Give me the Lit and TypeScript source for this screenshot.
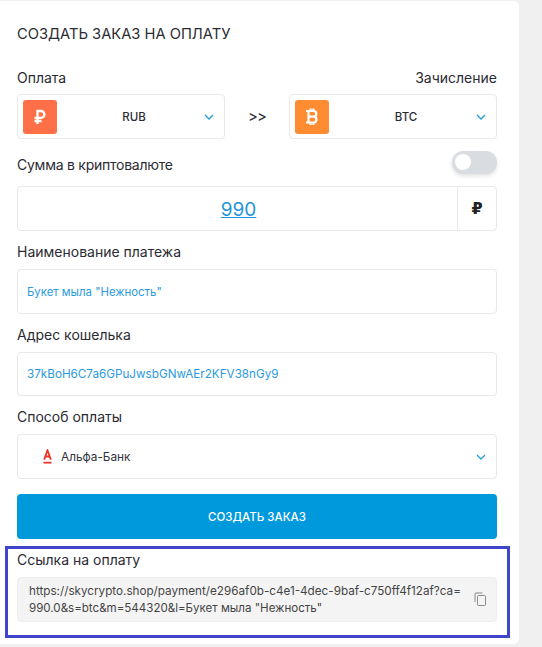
import { LitElement, html, css } from "lit";
import { customElement } from "lit/decorators.js";

const chevron = html`<svg class="chev" viewBox="0 0 10 6" width="10" height="6"><path d="M1 1l4 4 4-4" fill="none" stroke="#1f9fdc" stroke-width="1.3"/></svg>`;

@customElement("app-root")
export class AppRoot extends LitElement {
  static styles = css`
    :host { display: block; background: #f0f0f0; height: 647px; overflow: hidden; font-family: "Inter", "Noto Sans", sans-serif; color: #2b2b33; padding-top: 1px; box-sizing: border-box; }
    .card { width: 519px; height: 643px; box-sizing: border-box; background: #fff; border-radius: 0 5px 5px 0; padding: 0 22px 0 17px; display: flex; flex-direction: column; }
    .title { font-size: 14.7px; line-height: 20px; margin-top: 23px; letter-spacing: 0; }
    .label { font-size: 14px; line-height: 18px; }
    .between { display: flex; justify-content: space-between; align-items: center; }
    .row1 { margin-top: 25px; height: 18px; }
    .selects { display: flex; justify-content: space-between; align-items: center; margin-top: 7px; }
    .select { height: 45px; box-sizing: border-box; border: 1px solid #e9e9ec; border-radius: 4px; display: flex; align-items: center; padding: 0 10px 0 5px; background: #fff; }
    .half { width: 208px; }
    .coin { width: 34px; height: 34px; border-radius: 3px; display: flex; align-items: center; justify-content: center; flex: none; }
    .rub { background: #ff7048; }
    .btc { background: #ff8c33; }
    .code { flex: 1; text-align: center; font-size: 11.5px; font-weight: 500; padding-left: 7px; }
    .chev { flex: none; }
    .arrows { width: 64px; text-align: center; font-size: 15px; letter-spacing: -1px; }
    .amount-label { margin-top: 11px; height: 24px; }
    .amount-label span { padding-top: 6px; letter-spacing: -0.25px; }
    .toggle { width: 45px; height: 23px; border-radius: 12px; background: #d9dce0; box-shadow: 0 2px 4px rgba(0,0,0,.12); position: relative; }
    .knob { position: absolute; left: 3px; top: 3px; width: 16px; height: 16px; border-radius: 50%; background: #fff; }
    .amount { margin-top: 12px; height: 45px; box-sizing: border-box; border: 1px solid #e9e9ec; border-radius: 4px; display: flex; }
    .amount-value { flex: 1; display: flex; align-items: center; justify-content: center; font-size: 19px; color: #1f95d8; text-decoration: underline; padding: 2px 0 0 2px; }
    .amount-unit { width: 38px; border-left: 1px solid #e9e9ec; display: flex; align-items: center; justify-content: center; font-size: 16px; font-weight: 700; color: #222; font-family: "DejaVu Sans", sans-serif; }
    .flabel { margin-top: 12px; margin-bottom: 8px; height: 18px; }
    .field { height: 44.5px; box-sizing: border-box; border: 1px solid #e9e9ec; border-radius: 4px; display: flex; align-items: center; padding: 1px 9px 0; font-size: 11.4px; color: #2b9ae0; flex: none; }
    .addr { font-size: 11.7px; }
    .bank { padding-left: 25px; padding-right: 10px; color: #33333a; font-size: 11.8px; }
    .bank-name { flex: 1; margin-left: 9px; }
    .btn { margin-top: 15.5px; height: 45px; border-radius: 4px; background: #0099dc; color: #fff; display: flex; align-items: center; justify-content: center; font-size: 11.5px; font-weight: 500; flex: none; }
    .link-box { margin: 7px -13px 0 -12px; height: 92px; box-sizing: border-box; border: 3px solid #3e45c9; padding: 2px 10px 0 9px; flex: none; }
    .link-label { height: 20px; line-height: 18px; }
    .link { margin-top: 6px; height: 45px; box-sizing: border-box; background: #f4f4f5; border: 1px solid #eeeeef; border-radius: 4px; display: flex; align-items: center; padding: 0 10px 0 11px; font-size: 11.7px; line-height: 17px; color: #444; }
    .link-text { flex: 1; white-space: nowrap; overflow: hidden; }
    .line2 { font-size: 11.55px; }
    .copy { flex: none; margin-top: -2px; }
  `;

  render() {
    return html`<div class="card">
      <div class="title">СОЗДАТЬ ЗАКАЗ НА ОПЛАТУ</div>
      <div class="between row1 label"><span>Оплата</span><span>Зачисление</span></div>
      <div class="selects">
        <div class="select half">
          <div class="coin rub"><svg width="14" height="16" viewBox="0 0 14 16"><path d="M4.500 15V2h3.500a3.300 3.300 0 0 1 0 6.800H1.500M1.500 12H8.500" fill="none" stroke="#fff" stroke-width="2.300"/></svg></div>
          <span class="code">RUB</span>${chevron}
        </div>
        <div class="arrows">&gt;&gt;</div>
        <div class="select half">
          <div class="coin btc"><svg width="14" height="20" viewBox="0 0 14 20"><path d="M3 4h5.500a2.700 2.700 0 0 1 0 5.600H3M8.500 9.600a2.900 2.900 0 0 1 0 5.900H3M3.500 3v13.500M1 4h2M1 15.500h2M5.500 1.500V4M8.500 1.500V4M5.500 15.500V18M8.500 15.500V18" fill="none" stroke="#fff" stroke-width="2.200"/></svg></div>
          <span class="code">BTC</span>${chevron}
        </div>
      </div>
      <div class="between amount-label label"><span>Сумма в криптовалюте</span><div class="toggle"><div class="knob"></div></div></div>
      <div class="amount"><div class="amount-value">990</div><div class="amount-unit">₽</div></div>
      <div class="flabel label">Наименование платежа</div>
      <div class="field">Букет мыла "Нежность"</div>
      <div class="flabel label">Адрес кошелька</div>
      <div class="field addr">37kBoH6C7a6GPuJwsbGNwAEr2KFV38nGy9</div>
      <div class="flabel label">Способ оплаты</div>
      <div class="field bank">
        <svg width="9" height="15" viewBox="0 0 10 17"><path d="M1.200 12L5 1.500 8.800 12M2.500 8.500h5" fill="none" stroke="#ef3124" stroke-width="2"/><path d="M0.500 15.500h9" stroke="#ef3124" stroke-width="2"/></svg>
        <span class="bank-name">Альфа-Банк</span>${chevron}
      </div>
      <div class="btn">СОЗДАТЬ ЗАКАЗ</div>
      <div class="link-box">
        <div class="link-label label">Ссылка на оплату</div>
        <div class="link">
          <div class="link-text">https://skycrypto.shop/payment/e296af0b-c4e1-4dec-9baf-c750ff4f12af?ca=<br><span class="line2">990.0&amp;s=btc&amp;m=544320&amp;l=Букет мыла "Нежность"</span></div>
          <svg class="copy" width="12" height="14" viewBox="0 0 12 14"><path d="M8.500 1H2a1 1 0 0 0-1 1v8" fill="none" stroke="#8a8a8f" stroke-width="1"/><rect x="3.500" y="3.500" width="8" height="10" rx="1" fill="none" stroke="#8a8a8f" stroke-width="1"/></svg>
        </div>
      </div>
    </div>`;
  }
}
